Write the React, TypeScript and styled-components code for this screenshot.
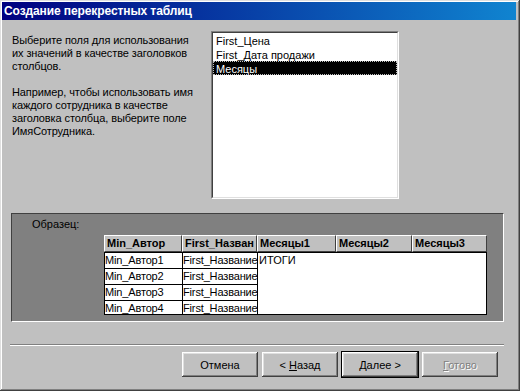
import React from "react";
import styled, { createGlobalStyle, css } from "styled-components";

const GlobalStyle = createGlobalStyle`
  html, body {
    margin: 0;
    padding: 0;
    background: #c0c0c0;
  }
  body {
    font-family: "Liberation Sans", Arial, sans-serif;
    font-size: 11px;
    color: #000;
  }
  * { box-sizing: border-box; }
`;

const Window = styled.div`
  width: 520px;
  height: 391px;
  padding: 2px 4px 2px 2px;
  background: #c0c0c0;
  display: flex;
  flex-direction: column;
  box-shadow: inset -1px -1px #404040, inset 1px 1px #dfdfdf,
    inset -2px -2px #808080, inset 2px 2px #ffffff;
`;

const TitleBar = styled.div`
  height: 18px;
  flex: none;
  display: flex;
  align-items: center;
  padding-left: 2px;
  background: linear-gradient(to right, #000080, #1084d0);
  color: #fff;
  font-weight: bold;
  font-size: 12px;
  letter-spacing: -0.1px;
  white-space: nowrap;
`;

const Content = styled.div`
  flex: 1;
  display: flex;
  flex-direction: column;
  padding: 11px 0 0 10px;
`;

const TopRow = styled.div`
  display: flex;
  height: 168px;
`;

const Instructions = styled.div`
  width: 199px;
  padding-top: 3px;
  line-height: 13px;
  white-space: nowrap;
  letter-spacing: -0.1px;
`;

const Paragraph = styled.p`
  margin: 0 0 13px 0;
`;

const ListBox = styled.div`
  width: 188px;
  height: 168px;
  border: 1px solid;
  border-color: #808080 #ffffff #ffffff #808080;
`;

const ListInner = styled.div`
  height: 100%;
  background: #fff;
  border: 1px solid;
  border-color: #404040 #dfdfdf #dfdfdf #404040;
`;

const ListItem = styled.div<{ $selected?: boolean }>`
  height: 14px;
  line-height: 14px;
  padding: 1px 0 0 3px;
  white-space: nowrap;
  ${(p) =>
    p.$selected &&
    css`
      background: #000;
      color: #fff;
      outline: 1px dotted #c0c0c0;
      outline-offset: -1px;
    `}
`;

const Panel = styled.div`
  margin: 14px 0 0 -1px;
  width: 493px;
  height: 109px;
  background: #808080;
  border: 1px solid;
  border-color: #404040 #ffffff #ffffff #404040;
  display: flex;
  flex-direction: column;
`;

const PanelLabel = styled.div`
  padding: 4px 0 0 20px;
  line-height: 13px;
  color: #000;
`;

const Table = styled.div`
  margin: 4px 0 0 92px;
  width: 383px;
  display: flex;
  flex-direction: column;
`;

const HeaderRow = styled.div`
  display: grid;
  grid-template-columns: 78px 75px 79px 76px 75px;
  height: 17px;
`;

const HeaderCell = styled.div`
  background: #c0c0c0;
  border: 1px solid;
  border-color: #ffffff #404040 #404040 #ffffff;
  padding-left: 2px;
  font-weight: bold;
  line-height: 15px;
  white-space: nowrap;
  overflow: hidden;
`;

const DataGrid = styled.div`
  display: grid;
  grid-template-columns: 77px 74px 228px;
  grid-template-rows: 15px 15px 15px 13px;
  gap: 1px;
  padding: 1px;
  background: #000;
`;

const DataCell = styled.div<{ $row?: number; $col?: number }>`
  background: #fff;
  line-height: 15px;
  white-space: nowrap;
  overflow: hidden;
  letter-spacing: -0.15px;
  grid-row: ${(p) => p.$row ?? "auto"};
  grid-column: ${(p) => p.$col ?? "auto"};
`;

const SummaryCell = styled.div`
  background: #fff;
  line-height: 15px;
  grid-column: 3;
  grid-row: 1 / span 4;
  padding-left: 1px;
`;

const Separator = styled.div`
  margin: 22px 0 0 -2px;
  width: 494px;
  height: 2px;
  border-top: 1px solid #808080;
  border-bottom: 1px solid #ffffff;
`;

const ButtonRow = styled.div`
  margin-top: 6px;
  display: flex;
  justify-content: flex-end;
  gap: 4px;
  padding-right: 18px;
`;

const Button = styled.button<{ $default?: boolean }>`
  width: 76px;
  height: 25px;
  border: none;
  background: #c0c0c0;
  font-family: "Liberation Sans", Arial, sans-serif;
  font-size: 11px;
  color: #000;
  padding: 0;
  box-shadow: inset -1px -1px #404040, inset 1px 1px #ffffff,
    inset -2px -2px #808080, inset 2px 2px #dfdfdf;
  ${(p) =>
    p.$default &&
    css`
      box-shadow: 0 0 0 1px #000, inset -1px -1px #404040,
        inset 1px 1px #ffffff, inset -2px -2px #808080,
        inset 2px 2px #dfdfdf;
    `}
  &:disabled {
    color: #808080;
    text-shadow: 1px 1px #ffffff;
  }
`;

const rows = ["Min_Автор1", "Min_Автор2", "Min_Автор3", "Min_Автор4"];

export default function App() {
  return (
    <>
      <GlobalStyle />
      <Window>
        <TitleBar>Создание перекрестных таблиц</TitleBar>
        <Content>
          <TopRow>
            <Instructions>
              <Paragraph>
                Выберите поля для использования
                <br />
                их значений в качестве заголовков
                <br />
                столбцов.
              </Paragraph>
              <Paragraph>
                Например, чтобы использовать имя
                <br />
                каждого сотрудника в качестве
                <br />
                заголовка столбца, выберите поле
                <br />
                ИмяСотрудника.
              </Paragraph>
            </Instructions>
            <ListBox>
              <ListInner>
                <ListItem>First_Цена</ListItem>
                <ListItem>First_Дата продажи</ListItem>
                <ListItem $selected>Месяцы</ListItem>
              </ListInner>
            </ListBox>
          </TopRow>
          <Panel>
            <PanelLabel>Образец:</PanelLabel>
            <Table>
              <HeaderRow>
                <HeaderCell>Min_Автор</HeaderCell>
                <HeaderCell>First_Назван</HeaderCell>
                <HeaderCell>Месяцы1</HeaderCell>
                <HeaderCell>Месяцы2</HeaderCell>
                <HeaderCell>Месяцы3</HeaderCell>
              </HeaderRow>
              <DataGrid>
                {rows.map((r, i) => (
                  <React.Fragment key={r}>
                    <DataCell $row={i + 1} $col={1}>{r}</DataCell>
                    <DataCell $row={i + 1} $col={2}>First_Название</DataCell>
                  </React.Fragment>
                ))}
                <SummaryCell>ИТОГИ</SummaryCell>
              </DataGrid>
            </Table>
          </Panel>
          <Separator />
          <ButtonRow>
            <Button>Отмена</Button>
            <Button>
              &lt; <u>Н</u>азад
            </Button>
            <Button $default>
              <u>Д</u>алее &gt;
            </Button>
            <Button disabled>
              <u>Г</u>отово
            </Button>
          </ButtonRow>
        </Content>
      </Window>
    </>
  );
}
